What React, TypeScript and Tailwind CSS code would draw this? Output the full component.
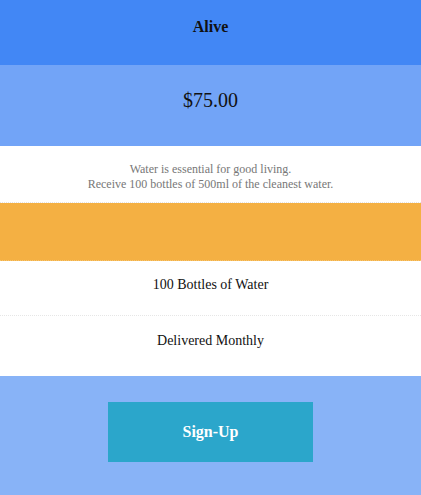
import React from 'react';

const features = [
    { label: '100 Bottles of Water', className: 'h-[55px] pt-[14px] border-b border-dotted border-[#e6e6e6]' },
    { label: 'Delivered Monthly', className: 'h-[60px] pt-[15px]' },
];

export default function App() {
    return (
        <div className="w-[421px] h-[495px] bg-white font-['Liberation_Serif',Georgia,serif] text-[#111]">
            <ul className="flex flex-col text-center">
                <li className="h-[65px] pt-[17px] bg-[#4287f5] text-[16px] leading-[20px] font-bold">
                    Alive
                </li>
                <li className="h-[81px] pt-[23px] bg-[#72a4f7] text-[20px] leading-[24px]">
                    $75.00
                </li>
                <li className="h-[57px] pt-[16px] border-b border-dotted border-[#e4e4e4] text-[12px] leading-[15px] text-[#777]">
                    Water is essential for good living.
                    <br />
                    Receive 100 bottles of 500ml of the cleanest water.
                </li>
                <li className="h-[58px] bg-[#f4b043] border-b border-dotted border-[#f6c46f]" />
                {features.map((f) => (
                    <li key={f.label} className={`text-[14px] leading-[20px] ${f.className}`}>
                        {f.label}
                    </li>
                ))}
                <li className="h-[119px] pt-[26px] bg-[#88b3f7] flex justify-center">
                    <button className="w-[205px] h-[60px] bg-[#2ba6cb] text-white font-bold text-[16px]">
                        Sign-Up
                    </button>
                </li>
            </ul>
        </div>
    );
}
